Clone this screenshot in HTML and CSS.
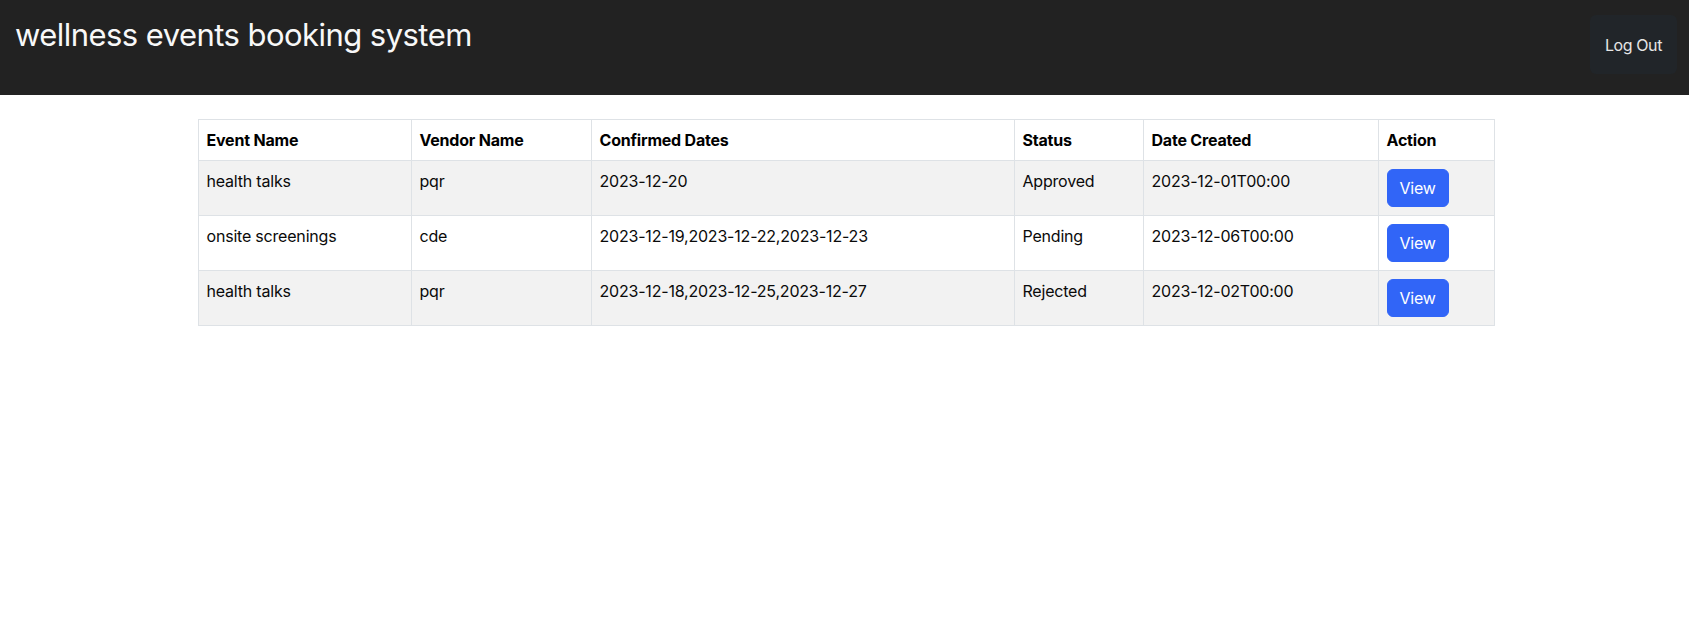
FILE: index.html
```html
<!DOCTYPE html>
<html lang="en">
<head>
<meta charset="utf-8">
<title>wellness events booking system</title>
<link rel="stylesheet" href="styles.css">
</head>
<body>
<header class="topbar">
  <h2 class="brand">wellness events booking system</h2>
  <button class="btn-logout" type="button">Log Out</button>
</header>
<main class="content">
  <table class="events">
    <colgroup>
      <col class="c-event">
      <col class="c-vendor">
      <col class="c-dates">
      <col class="c-status">
      <col class="c-created">
      <col class="c-action">
    </colgroup>
    <thead>
      <tr>
        <th>Event Name</th>
        <th>Vendor Name</th>
        <th>Confirmed Dates</th>
        <th>Status</th>
        <th>Date Created</th>
        <th>Action</th>
      </tr>
    </thead>
    <tbody>
      <tr class="striped">
        <td>health talks</td>
        <td>pqr</td>
        <td>2023-12-20</td>
        <td>Approved</td>
        <td>2023-12-01T00:00</td>
        <td><button class="btn-view" type="button">View</button></td>
      </tr>
      <tr>
        <td>onsite screenings</td>
        <td>cde</td>
        <td>2023-12-19,2023-12-22,2023-12-23</td>
        <td>Pending</td>
        <td>2023-12-06T00:00</td>
        <td><button class="btn-view" type="button">View</button></td>
      </tr>
      <tr class="striped">
        <td>health talks</td>
        <td>pqr</td>
        <td>2023-12-18,2023-12-25,2023-12-27</td>
        <td>Rejected</td>
        <td>2023-12-02T00:00</td>
        <td><button class="btn-view" type="button">View</button></td>
      </tr>
    </tbody>
  </table>
</main>
</body>
</html>
```

FILE: styles.css
```css
* { box-sizing: border-box; }

html, body {
  margin: 0;
  padding: 0;
  background: #ffffff;
}

body {
  font-family: Inter, "Noto Sans", "Liberation Sans", sans-serif;
  font-size: 16px;
  line-height: 1.5;
  color: #0a0a0a;
  letter-spacing: -0.2px;
}

.topbar {
  height: 95px;
  background: #222222;
  display: flex;
  justify-content: space-between;
  align-items: flex-start;
  padding: 0 12px 0 15px;
}

.brand {
  margin: 16px 0 0 0;
  font-size: 31px;
  font-weight: 400;
  line-height: 1.2;
  color: #f8f8f8;
  letter-spacing: -0.55px;
}

.btn-logout {
  margin-top: 15px;
  height: 59px;
  padding: 0 15px;
  border: none;
  border-radius: 6px;
  background: #212529;
  color: #e6e6e6;
  font-family: inherit;
  font-size: 16px;
  line-height: 24px;
  letter-spacing: -0.4px;
  cursor: pointer;
}

.content {
  width: 1296px;
  margin: 24px auto 0 auto;
  padding-left: 1px;
}

.events {
  width: 1296px;
  table-layout: fixed;
  border-collapse: collapse;
}

.c-event { width: 213px; }
.c-vendor { width: 180px; }
.c-dates { width: 423px; }
.c-status { width: 129px; }
.c-created { width: 235px; }
.c-action { width: 116px; }

.events th,
.events td {
  border: 1px solid #dee2e6;
  padding: 8px;
  text-align: left;
  vertical-align: top;
  line-height: 24px;
  white-space: nowrap;
}

.events th {
  font-weight: 700;
  color: #000000;
}

.events tr.striped td {
  background: #f2f2f2;
}

.btn-view {
  display: inline-block;
  padding: 6px 12px;
  border: 1px solid #3165f7;
  border-radius: 6px;
  background: #3165f7;
  color: #ffffff;
  font-family: inherit;
  font-size: 16px;
  line-height: 24px;
  letter-spacing: -0.2px;
  cursor: pointer;
}
```
